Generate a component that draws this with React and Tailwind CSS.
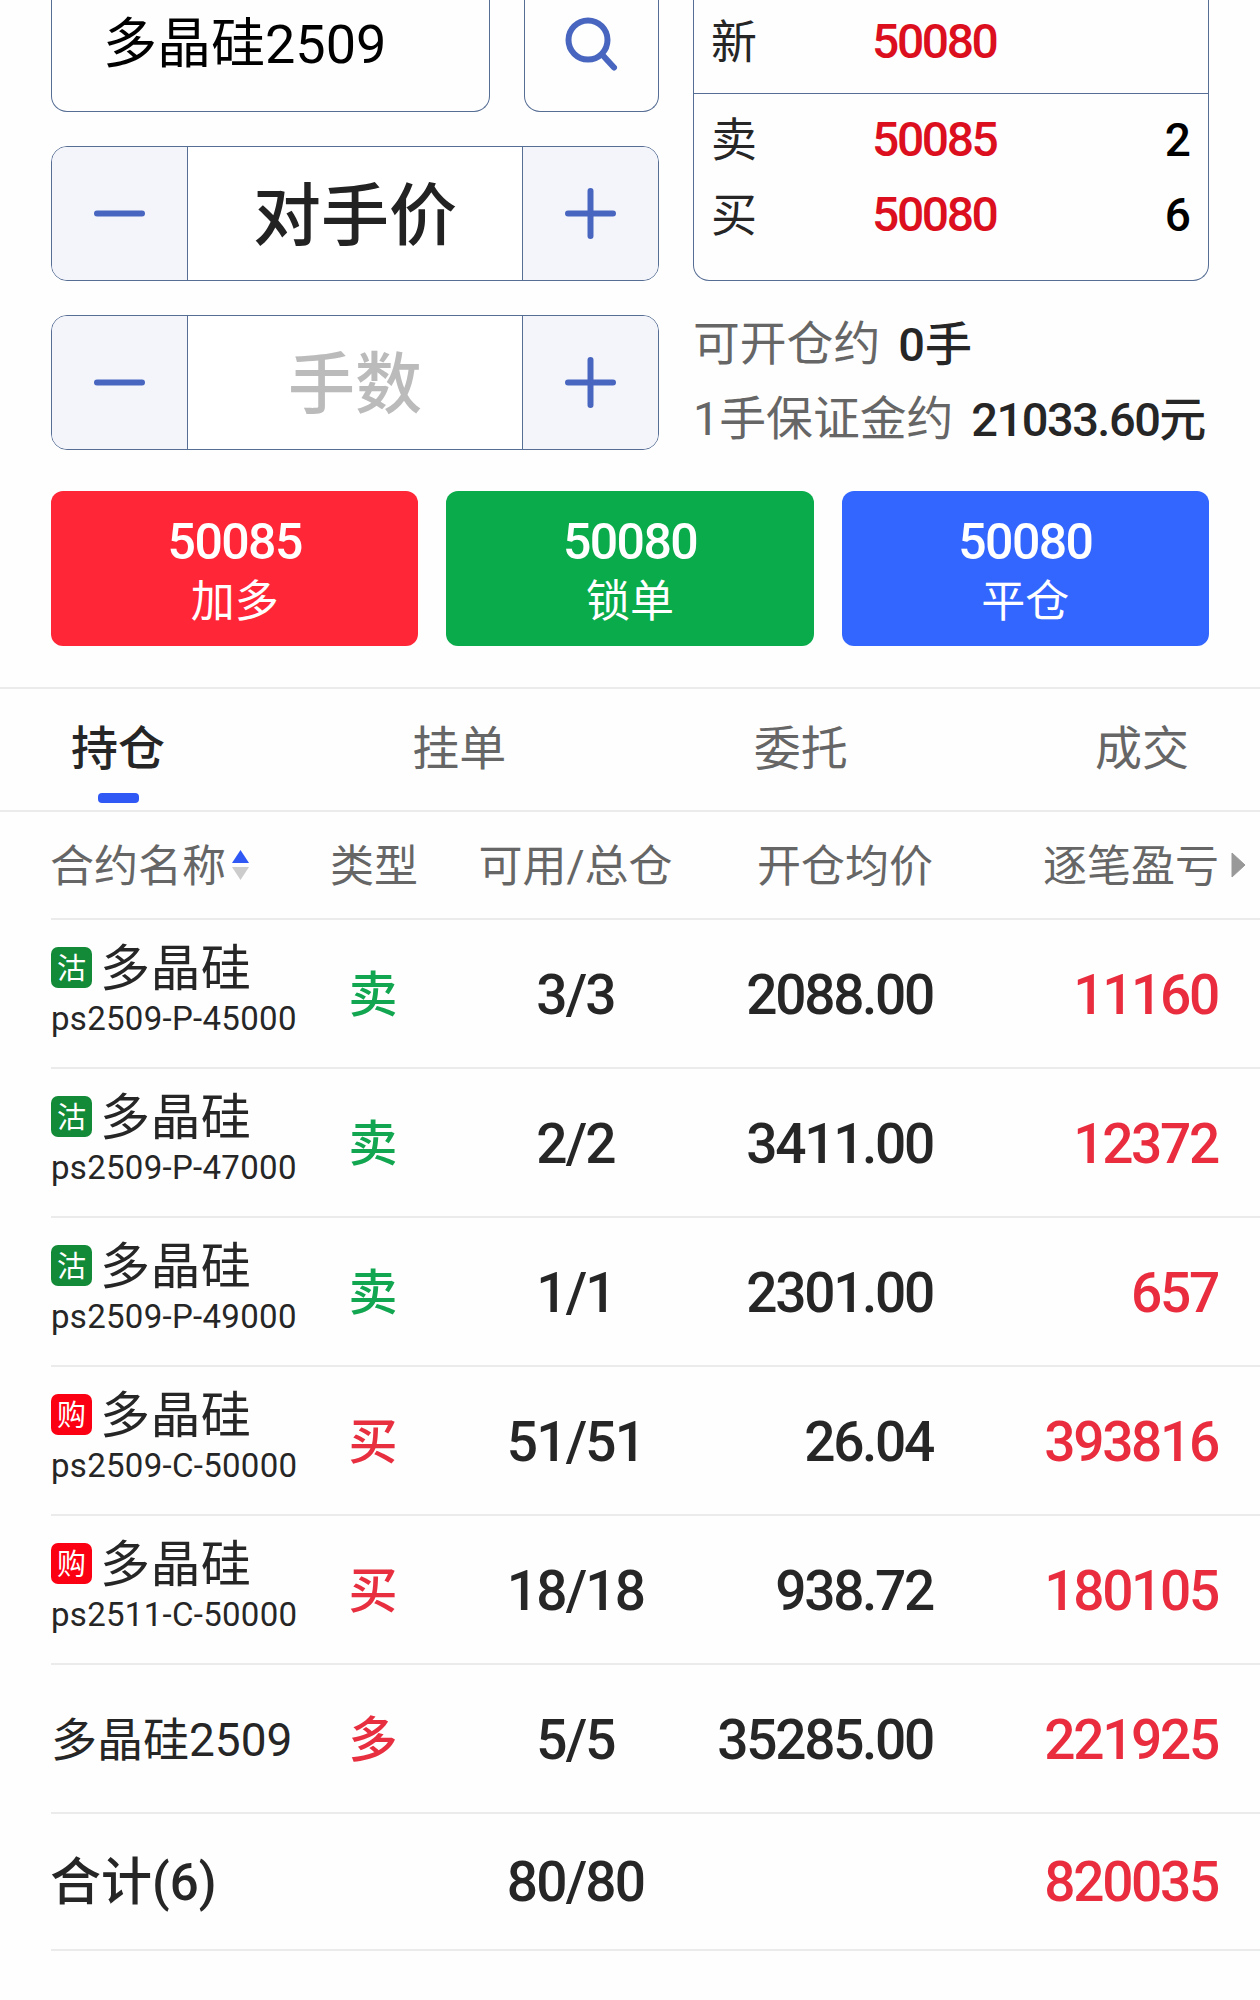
import { useState } from "react";

const tabs = ["持仓", "挂单", "委托", "成交"];

const actions = [
  { price: "50085", label: "加多", color: "bg-[#ff2637]" },
  { price: "50080", label: "锁单", color: "bg-[#09ab4b]" },
  { price: "50080", label: "平仓", color: "bg-[#3366ff]" },
];

const positions = [
  { badge: "沽", name: "多晶硅", code: "ps2509-P-45000", side: "卖", qty: "3/3", price: "2088.00", profit: "11160" },
  { badge: "沽", name: "多晶硅", code: "ps2509-P-47000", side: "卖", qty: "2/2", price: "3411.00", profit: "12372" },
  { badge: "沽", name: "多晶硅", code: "ps2509-P-49000", side: "卖", qty: "1/1", price: "2301.00", profit: "657" },
  { badge: "购", name: "多晶硅", code: "ps2509-C-50000", side: "买", qty: "51/51", price: "26.04", profit: "393816" },
  { badge: "购", name: "多晶硅", code: "ps2511-C-50000", side: "买", qty: "18/18", price: "938.72", profit: "180105" },
  { name: "多晶硅2509", side: "多", qty: "5/5", price: "35285.00", profit: "221925" },
];

const Stepper = ({ children }) => (
  <div className="flex h-[135px] w-[608px] overflow-hidden rounded-[16px] border-[1.5px] border-[#566d94] bg-white">
    <button className="flex w-[136px] items-center justify-center border-r border-[#566d94] bg-[#f3f5fb]">
      <svg width="51" height="51" viewBox="0 0 51 51" stroke="#4866bf" strokeWidth="6" strokeLinecap="round">
        <path d="M3 25.5h45" />
      </svg>
    </button>
    <div className="flex flex-1 items-center justify-center pt-[6px]">{children}</div>
    <button className="flex w-[136px] items-center justify-center border-l border-[#566d94] bg-[#f3f5fb]">
      <svg width="51" height="51" viewBox="0 0 51 51" stroke="#4866bf" strokeWidth="6" strokeLinecap="round">
        <path d="M3 25.5h45M25.5 3v45" />
      </svg>
    </button>
  </div>
);

const QuoteRow = ({ label, price, volume }) => (
  <div className="flex h-[75px] items-center pl-[17px] pr-[17px]">
    <span className="w-[161px] text-[46px]">{label}</span>
    <span className="flex-1 text-[48px] font-medium tracking-[-2.4px] text-[#dc0f1e]">{price}</span>
    <span className="text-[46px] font-medium text-black">{volume}</span>
  </div>
);

const PositionRow = ({ item }) => (
  <div className="grid h-[149px] grid-cols-[279px_86px_319px_198px_285px] items-center whitespace-nowrap border-b-2 border-[#ebebeb] pt-[3px]">
    {item.badge ? (
      <div className="flex flex-col pb-[11px]">
        <div className="flex h-[50px] items-center gap-[8px]">
          <span
            className={`-mt-[3px] flex h-[41px] w-[41px] items-center justify-center rounded-[7px] pt-[3px] text-[29px] text-white ${
              item.badge === "沽" ? "bg-[#128a37]" : "bg-[#fb0012]"
            }`}
          >
            {item.badge}
          </span>
          <span className="text-[50px] tracking-[0.4px]">{item.name}</span>
        </div>
        <span className="mt-[8px] text-[33px] tracking-[0.3px]">{item.code}</span>
      </div>
    ) : (
      <span className="text-[46px]">{item.name}</span>
    )}
    <span className={`text-center text-[49px] font-medium ${item.side === "卖" ? "text-[#12a651]" : "text-[#e72f40]"}`}>
      {item.side}
    </span>
    <span className="text-center text-[55px] font-medium tracking-[-1.8px]">{item.qty}</span>
    <span className="-ml-[60px] text-right text-[55px] font-medium tracking-[-2.3px]">{item.price}</span>
    <span className="text-right text-[55px] font-medium tracking-[-2.3px] text-[#e92d3f]">{item.profit}</span>
  </div>
);

export default function App() {
  const [activeTab, setActiveTab] = useState("持仓");

  return (
    <div className="h-[2000px] w-[1260px] overflow-hidden bg-[#fefefe] font-['Roboto','Noto_Sans_CJK_SC',sans-serif] leading-none text-[#262626]">
      <div className="flex h-[450px] gap-[34px] pl-[51px]">
        <div className="flex flex-col gap-[34px]">
          <div className="flex h-[112px] gap-[34px]">
            <div className="flex w-[439px] items-center rounded-b-[16px] border-[1.5px] border-t-0 border-[#566d94] pb-[21px] pl-[51px]">
              <span className="text-[54px] text-black">多晶硅2509</span>
            </div>
            <button className="flex w-[135px] justify-center rounded-b-[16px] border-[1.5px] border-t-0 border-[#566d94] pr-[2px] pt-[16px]">
              <svg width="56" height="56" viewBox="0 0 56 56" fill="none" stroke="#4866bf" strokeWidth="6" strokeLinecap="round">
                <circle cx="25" cy="24" r="19.5" />
                <path d="M39.5 39 51 51.5" />
              </svg>
            </button>
          </div>
          <Stepper>
            <span className="text-[68px] font-medium text-[#222]">对手价</span>
          </Stepper>
          <Stepper>
            <span className="text-[67px] font-medium text-[#bbb]">手数</span>
          </Stepper>
        </div>

        <div className="w-[516px]">
          <div className="h-[281px] rounded-b-[16px] border-[1.5px] border-t-0 border-[#566d94]">
            <div className="h-[94px] border-b-[1.5px] border-[#566d94] pt-[4px]">
              <QuoteRow label="新" price="50080" />
            </div>
            <div className="pt-[8px]">
              <QuoteRow label="卖" price="50085" volume="2" />
              <QuoteRow label="买" price="50080" volume="6" />
            </div>
          </div>
          <div className="mt-[26px] whitespace-nowrap">
            <div className="flex h-[75px] items-center gap-[18px]">
              <span className="text-[46.8px] text-[#666]">可开仓约</span>
              <span className="text-[47px] font-medium">0手</span>
            </div>
            <div className="flex h-[75px] items-center gap-[18px]">
              <span className="text-[46.8px] text-[#666]">1手保证金约</span>
              <span className="text-[47px] font-medium tracking-[-1.5px]">21033.60元</span>
            </div>
          </div>
        </div>
      </div>

      <div className="mt-[41px] flex gap-[28px] px-[51px]">
        {actions.map((item) => (
          <button
            key={item.label}
            className={`flex h-[155px] flex-1 flex-col items-center rounded-[12px] pt-[26px] text-white ${item.color}`}
          >
            <span className="text-[50px] font-medium tracking-[-1.6px]">{item.price}</span>
            <span className="mt-[13px] text-[44px]">{item.label}</span>
          </button>
        ))}
      </div>

      <div className="mt-[41px] flex h-[125px] justify-between border-y-2 border-[#ebebeb] px-[71px]">
        {tabs.map((tab) => (
          <button
            key={tab}
            onClick={() => setActiveTab(tab)}
            className={`flex flex-col items-center pt-[36px] text-[47px] ${
              activeTab === tab ? "font-medium" : "text-[#666]"
            }`}
          >
            {tab}
            {activeTab === tab && <span className="mt-[21px] h-[10px] w-[41px] rounded-[4px] bg-[#2f58f5]" />}
          </button>
        ))}
      </div>

      <div className="pl-[51px]">
        <div className="grid h-[108px] grid-cols-[279px_86px_319px_198px_286px_41px] items-center whitespace-nowrap border-b-2 border-[#ebebeb] pt-[4px] text-[44px] text-[#666]">
          <span className="-ml-px flex items-center gap-[6px]">
            合约名称
            <svg className="-mt-[4px]" width="17" height="30" viewBox="0 0 17 30">
              <path d="M8.5 0 17 13H0z" fill="#2f58f5" />
              <path d="M0 17h17L8.5 30z" fill="#ccc" />
            </svg>
          </span>
          <span className="text-center">类型</span>
          <span className="text-center">可用/总仓</span>
          <span className="text-right">开仓均价</span>
          <span className="text-right">逐笔盈亏</span>
          <svg className="-mt-[4px] ml-[12px]" width="15" height="26" viewBox="0 0 15 26">
            <path d="M1 1 14 13 1 25z" fill="#999" stroke="#999" strokeLinejoin="round" />
          </svg>
        </div>
        {positions.map((item, i) => (
          <PositionRow key={i} item={item} />
        ))}
        <div className="grid h-[137px] grid-cols-[279px_86px_319px_198px_285px] items-center border-b-2 border-[#ebebeb] pt-[2px] font-medium">
          <span className="-ml-px text-[51px]">合计(6)</span>
          <span />
          <span className="text-center text-[55px] tracking-[-1.8px]">80/80</span>
          <span />
          <span className="text-right text-[55px] tracking-[-2.3px] text-[#e92d3f]">820035</span>
        </div>
      </div>
    </div>
  );
}
